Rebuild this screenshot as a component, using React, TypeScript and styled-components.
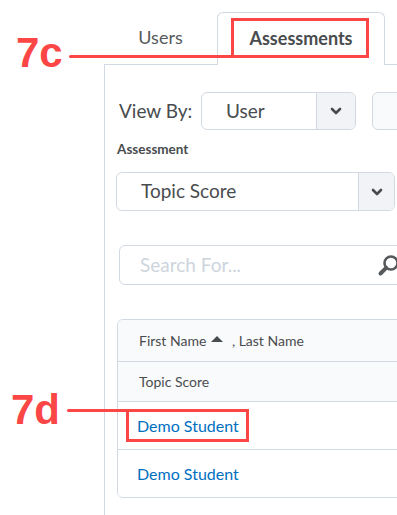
import React from 'react';
import styled, { createGlobalStyle } from 'styled-components';

/* -------------------------------- Globals --------------------------------- */
const GlobalStyle = createGlobalStyle`
  html, body {
    margin: 0;
    padding: 0;
    background: #ffffff;
  }
  body {
    font-family: Lato, 'Open Sans', sans-serif;
    color: #494c4e;
  }
`;

const BORDER = '#d3d9e3';
const RED = '#fb4646';

/* --------------------------------- Layout --------------------------------- */
const Page = styled.div`
  position: relative;
  width: 397px;
  height: 515px;
  overflow: hidden;
  display: flex;
  flex-direction: column;
  padding-top: 12px;
  box-sizing: border-box;
`;

const TabBar = styled.div`
  display: flex;
  align-items: flex-end;
  height: 52px;
  margin-left: 104px;
`;

const Tab = styled.div<{ $active?: boolean }>`
  box-sizing: border-box;
  display: flex;
  align-items: center;
  justify-content: center;
  font-size: 18px;
  position: relative;
  z-index: 1;
  background: #fff;
  width: ${(p) => (p.$active ? '168px' : '113px')};
  height: ${(p) => (p.$active ? '53px' : '52px')};
  margin-bottom: ${(p) => (p.$active ? '-1px' : '0')};
  padding-bottom: ${(p) => (p.$active ? '3px' : '2px')};
  font-weight: ${(p) => (p.$active ? 700 : 400)};
  color: ${(p) => (p.$active ? '#494c4e' : '#565a5c')};
  border: ${(p) => (p.$active ? `1px solid ${BORDER}` : 'none')};
  border-bottom: none;
  border-radius: 6px 6px 0 0;
`;

const Panel = styled.div`
  flex: 1;
  margin-left: 104px;
  border-top: 1px solid ${BORDER};
  border-left: 1px solid ${BORDER};
  padding: 27px 0 0 12px;
  display: flex;
  flex-direction: column;
  align-items: flex-start;
`;

const ViewRow = styled.div`
  display: flex;
  align-items: center;
  height: 38px;
`;

const ViewLabel = styled.span`
  font-size: 19px;
  padding: 0 0 2px 2px;
  width: 82px;
  color: #494c4e;
`;

const Select = styled.div<{ $width: number; $height: number; $chevron: number }>`
  box-sizing: border-box;
  display: flex;
  width: ${(p) => p.$width}px;
  height: ${(p) => p.$height}px;
  border: 1px solid ${BORDER};
  border-radius: 6px;
  overflow: hidden;
  background: #fff;
  flex-shrink: 0;
  & > span {
    flex: 1;
    display: flex;
    align-items: center;
    padding: 0 0 2px 24px;
    font-size: 19px;
    color: #494c4e;
  }
  & > i {
    width: ${(p) => p.$chevron}px;
    border-left: 1px solid ${BORDER};
    background: #f1f3f6;
    display: flex;
    align-items: center;
    justify-content: center;
  }
`;

const GhostBox = styled.div`
  box-sizing: border-box;
  width: 60px;
  height: 38px;
  margin-left: 16px;
  border: 1px solid ${BORDER};
  border-radius: 6px;
  background: #f9fafb;
  flex-shrink: 0;
`;

const FieldLabel = styled.div`
  margin-top: 10px;
  font-size: 13.5px;
  font-weight: 700;
  line-height: 18px;
  color: #494c4e;
`;

const SelectWrap = styled.div`
  margin: 14px 0 0 -1px;
`;

const Search = styled.div`
  box-sizing: border-box;
  margin: 34px 0 0 2px;
  width: 300px;
  height: 40px;
  border: 1px solid ${BORDER};
  border-radius: 6px;
  display: flex;
  align-items: center;
  padding: 0 0 2px 20px;
  position: relative;
  flex-shrink: 0;
  span {
    font-size: 19px;
    color: #cdd5dc;
  }
  svg {
    position: absolute;
    left: 257px;
    top: 8px;
  }
`;

const Table = styled.div`
  box-sizing: border-box;
  margin-top: 34px;
  width: 320px;
  border: 1px solid ${BORDER};
  border-radius: 6px;
  overflow: hidden;
  flex-shrink: 0;
`;

const Row = styled.div<{ $head?: boolean; $height: number; $last?: boolean }>`
  display: flex;
  align-items: center;
  height: ${(p) => p.$height}px;
  padding-left: ${(p) => (p.$head ? '21px' : '19px')};
  padding-bottom: 1px;
  box-sizing: border-box;
  background: ${(p) => (p.$head ? '#f9fafb' : '#fff')};
  border-bottom: ${(p) => (p.$last ? 'none' : `1px solid ${BORDER}`)};
  font-size: 14px;
  color: #494c4e;
  white-space: pre;
`;

const SortArrow = styled.span`
  display: inline-block;
  width: 0;
  height: 0;
  margin: 0 5px 2px 5px;
  border-left: 6px solid transparent;
  border-right: 6px solid transparent;
  border-bottom: 6px solid #494c4e;
`;

const StudentLink = styled.a`
  font-size: 16px;
  color: #006fbf;
  text-decoration: none;
`;

/* ------------------------------- Annotations ------------------------------ */
const Callout = styled.div<{ $x: number; $y: number }>`
  position: absolute;
  left: ${(p) => p.$x}px;
  top: ${(p) => p.$y}px;
  font-family: 'Liberation Sans', Arial, sans-serif;
  font-weight: 700;
  font-size: 42px;
  line-height: 42px;
  color: ${RED};
  z-index: 5;
`;

const Leader = styled.div<{ $x: number; $y: number; $w: number }>`
  position: absolute;
  left: ${(p) => p.$x}px;
  top: ${(p) => p.$y}px;
  width: ${(p) => p.$w}px;
  height: 3px;
  border-radius: 2px;
  background: ${RED};
  z-index: 5;
`;

const Highlight = styled.div<{ $x: number; $y: number; $w: number; $h: number }>`
  position: absolute;
  box-sizing: border-box;
  left: ${(p) => p.$x}px;
  top: ${(p) => p.$y}px;
  width: ${(p) => p.$w}px;
  height: ${(p) => p.$h}px;
  border: 3px solid ${RED};
  z-index: 5;
`;

const Chevron = () => (
  <svg width="12" height="8" viewBox="0 0 12 8">
    <polyline points="2,2 6,6 10,2" fill="none" stroke="#494c4e" strokeWidth="2.6" strokeLinecap="round" strokeLinejoin="round" />
  </svg>
);

const SearchIcon = () => (
  <svg width="24" height="24" viewBox="0 0 24 24">
    <circle cx="14" cy="9" r="6.5" fill="none" stroke="#565a5c" strokeWidth="2.6" />
    <line x1="9.2" y1="13.8" x2="3.5" y2="19.5" stroke="#565a5c" strokeWidth="4" strokeLinecap="round" />
  </svg>
);

const App = () => {
  return (
    <Page>
      <GlobalStyle />
      <TabBar>
        <Tab>Users</Tab>
        <Tab $active>Assessments</Tab>
      </TabBar>
      <Panel>
        <ViewRow>
          <ViewLabel>View By:</ViewLabel>
          <Select $width={155} $height={38} $chevron={38}>
            <span>User</span>
            <i>
              <Chevron />
            </i>
          </Select>
          <GhostBox />
        </ViewRow>
        <FieldLabel>Assessment</FieldLabel>
        <SelectWrap>
          <Select $width={279} $height={39} $chevron={35}>
            <span>Topic Score</span>
            <i>
              <Chevron />
            </i>
          </Select>
        </SelectWrap>
        <Search>
          <span>Search For...</span>
          <SearchIcon />
        </Search>
        <Table>
          <Row $head $height={42}>
            {'First Name'}
            <SortArrow />
            {' , Last Name'}
          </Row>
          <Row $head $height={40}>
            Topic Score
          </Row>
          <Row $height={48}>
            <StudentLink href="#">Demo Student</StudentLink>
          </Row>
          <Row $height={47} $last>
            <StudentLink href="#">Demo Student</StudentLink>
          </Row>
        </Table>
      </Panel>

      <Callout $x={16} $y={32}>7c</Callout>
      <Leader $x={69} $y={55} $w={165} />
      <Highlight $x={231} $y={18} $w={138} $h={40} />

      <Callout $x={11} $y={389}>7d</Callout>
      <Leader $x={67} $y={409} $w={62} />
      <Highlight $x={126} $y={409} $w={123} $h={33} />
    </Page>
  );
};

export default App;
